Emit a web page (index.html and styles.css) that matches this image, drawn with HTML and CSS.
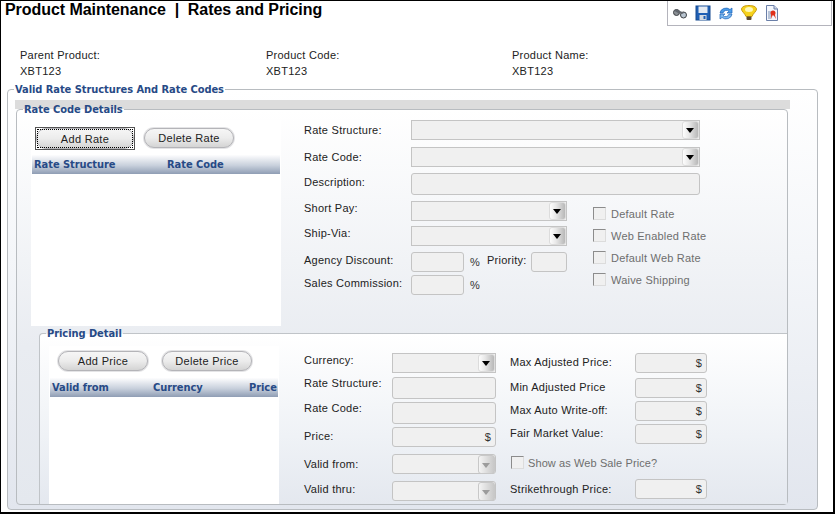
FILE: index.html
```html
<!DOCTYPE html>
<html lang="en">
<head>
<meta charset="utf-8">
<title>Product Maintenance | Rates and Pricing</title>
<link rel="stylesheet" href="styles.css">
</head>
<body>
<div class="frame">
  <header class="top">
    <h1 class="title">Product Maintenance&nbsp; |&nbsp; Rates and Pricing</h1>
    <div class="toolbar">
      <svg class="tool" width="16" height="16" viewBox="0 0 16 16"><circle cx="4.500" cy="7.500" r="3" fill="#8a8f94" stroke="#3c4044"/><circle cx="11.500" cy="10" r="3" fill="#b8c4d0" stroke="#3c4044"/><path d="M2 5.500 4.500 4 9 6.500 13 7.500 10 9 6 8z" fill="#60656c"/></svg>
      <svg class="tool" width="16" height="16" viewBox="0 0 16 16"><rect x="1" y="1" width="14" height="14" fill="#1f5fb4" stroke="#164a90"/><rect x="3.500" y="1.500" width="9" height="6.500" fill="#e4eaf2"/><rect x="4.500" y="10" width="7" height="5" fill="#d4dae2"/><rect x="8.500" y="11" width="2" height="3" fill="#1f5fb4"/></svg>
      <svg class="tool" width="16" height="16" viewBox="0 0 16 16"><path d="M2 8a6 5.500 0 0 1 10-3.500L14 3v5H9l2-1.500A3.500 3.500 0 0 0 5 8z" fill="#4a9be8" stroke="#1b63b8" stroke-width=".7"/><path d="M14 9a6 5.500 0 0 1-10 3.500L2 14V9h5l-2 1.500A3.500 3.500 0 0 0 11 9z" fill="#7db9f0" stroke="#1b63b8" stroke-width=".7"/></svg>
      <svg class="tool" width="16" height="16" viewBox="0 0 16 16"><path d="M.5 4C1 1.500 4 .5 8 .5s7 1 7.500 3.500c.3 2-3.500 4.500-4.500 7.500H5C4 8.500.2 6 .5 4z" fill="#f6d21c" stroke="#c79a10"/><ellipse cx="8" cy="4.500" rx="4" ry="2.500" fill="#fdf8b8"/><rect x="5.500" y="11.500" width="5" height="3.500" rx="1" fill="#5c4a30"/></svg>
      <svg class="tool" width="16" height="16" viewBox="0 0 16 16"><path d="M2.500.5H10L13.500 4v11.500h-11z" fill="#f4f6fb" stroke="#6a7fa8"/><path d="M10 .5V4h3.500" fill="#d0d8e8" stroke="#6a7fa8"/><rect x="4" y="6" width="3" height="8" fill="#b8c4d8"/><circle cx="9" cy="8" r="2.500" fill="#e0301a"/><path d="M7 10h1.500l-1 4zM9.500 10H11l1 4z" fill="#e0301a"/></svg>
    </div>
  </header>

  <section class="info">
    <div class="info-item"><span>Parent Product:</span><span>XBT123</span></div>
    <div class="info-item"><span>Product Code:</span><span>XBT123</span></div>
    <div class="info-item"><span>Product Name:</span><span>XBT123</span></div>
  </section>

  <fieldset class="outer">
    <legend class="legend">Valid Rate Structures And Rate Codes</legend>
    <div class="grey-band">
      <fieldset class="details">
        <legend class="legend">Rate Code Details</legend>

        <div class="rate-area">
          <div class="list-panel rate-list">
            <div class="btn-row">
              <span class="focus-ring"><button class="pill pill-add" type="button">Add Rate</button></span>
              <span class="halo"><button class="pill pill-del" type="button">Delete Rate</button></span>
            </div>
            <div class="thead">
              <span class="col-structure">Rate Structure</span>
              <span>Rate Code</span>
            </div>
          </div>

          <div class="rate-form">
            <div class="row row-s"><label class="lbl w107">Rate Structure:</label><div class="select wide"><i class="arrow"></i></div></div>
            <div class="row row-s m7"><label class="lbl w107">Rate Code:</label><div class="select wide"><i class="arrow"></i></div></div>
            <div class="row row-d m6"><label class="lbl w107 up2">Description:</label><div class="input wide tall"></div></div>
            <div class="rate-lower">
              <div class="lower-left">
                <div class="row row-s m6"><label class="lbl w107 up3">Short Pay:</label><div class="select mid"><i class="arrow"></i></div></div>
                <div class="row row-s m5"><label class="lbl w107 up3">Ship-Via:</label><div class="select mid"><i class="arrow"></i></div></div>
                <div class="row row-s m6">
                  <label class="lbl w107 up2">Agency Discount:</label>
                  <div class="input short"></div>
                  <span class="pct">%</span>
                  <label class="lbl priority up2">Priority:</label>
                  <div class="input tiny"></div>
                </div>
                <div class="row row-s m3">
                  <label class="lbl w107 up2">Sales Commission:</label>
                  <div class="input short"></div>
                  <span class="pct">%</span>
                </div>
              </div>
              <div class="checks">
                <div class="check"><i class="box"></i><span>Default Rate</span></div>
                <div class="check"><i class="box"></i><span>Web Enabled Rate</span></div>
                <div class="check"><i class="box"></i><span>Default Web Rate</span></div>
                <div class="check"><i class="box"></i><span>Waive Shipping</span></div>
              </div>
            </div>
          </div>
        </div>

        <fieldset class="pricing">
          <legend class="legend">Pricing Detail</legend>
          <div class="pricing-area">
            <div class="list-panel price-list">
              <div class="btn-row btn-row-price">
                <span class="halo"><button class="pill pill-price" type="button">Add Price</button></span>
                <span class="halo"><button class="pill pill-price" type="button">Delete Price</button></span>
              </div>
              <div class="thead thead-price">
                <span>Valid from</span>
                <span>Currency</span>
                <span>Price</span>
              </div>
            </div>

            <div class="price-form">
              <div class="row row-s"><label class="lbl w88 up3">Currency:</label><div class="select field"><i class="arrow"></i></div></div>
              <div class="row row-p m4"><label class="lbl w88 up5">Rate Structure:</label><div class="input field tall"></div></div>
              <div class="row row-p m3"><label class="lbl w88 up5">Rate Code:</label><div class="input field tall"></div></div>
              <div class="row row-s m3"><label class="lbl w88 up1">Price:</label><div class="input field money">$</div></div>
              <div class="row row-v m6"><label class="lbl w88">Valid from:</label><div class="input field"><i class="arrow arrow-off"></i></div></div>
              <div class="row row-v m6"><label class="lbl w88 up2">Valid thru:</label><div class="input field"><i class="arrow arrow-off"></i></div></div>
            </div>

            <div class="price-form-right">
              <div class="row row-s"><label class="lbl w125 up1">Max Adjusted Price:</label><div class="input amount money">$</div></div>
              <div class="row row-s m5"><label class="lbl w125 up1">Min Adjusted Price</label><div class="input amount money">$</div></div>
              <div class="row row-s m3"><label class="lbl w125 up1">Max Auto Write-off:</label><div class="input amount money">$</div></div>
              <div class="row row-s m3"><label class="lbl w125 up1">Fair Market Value:</label><div class="input amount money">$</div></div>
              <div class="check check-web"><i class="box"></i><span>Show as Web Sale Price?</span></div>
              <div class="row row-s m10"><label class="lbl w125">Strikethrough Price:</label><div class="input amount money">$</div></div>
            </div>
          </div>
        </fieldset>
      </fieldset>
    </div>
  </fieldset>
</div>
</body>
</html>
```

FILE: styles.css
```css
* { box-sizing: border-box; }

html, body { margin: 0; padding: 0; background: #fff; }

body {
  width: 835px;
  height: 515px;
  overflow: hidden;
  font-family: "Liberation Sans", Arial, sans-serif;
  font-size: 11px;
  letter-spacing: .25px;
  color: #222;
}

.frame {
  width: 835px;
  height: 514px;
  border: 1px solid #000;
  border-width: 1px 2px 2px 1px;
  overflow: hidden;
}

.top {
  display: flex;
  justify-content: space-between;
  align-items: flex-start;
  height: 46px;
}

.title {
  margin: 0 0 0 4px;
  font-size: 16px;
  line-height: 18px;
  font-weight: bold;
  letter-spacing: -.05px;
  color: #000;
}

.toolbar {
  width: 165px;
  height: 25px;
  margin-right: 1px;
  border: 1px solid #b4b4bc;
  border-top: 0;
  display: flex;
  align-items: center;
  gap: 7px;
  padding: 0 0 0 4px;
}

.tool { flex: none; }

.info {
  display: grid;
  grid-template-columns: repeat(3, 246px);
  padding-left: 19px;
  height: 36px;
  color: #222;
}

.info-item {
  display: flex;
  flex-direction: column;
  line-height: 16px;
}

.legend {
  font-family: "DejaVu Sans", Verdana, sans-serif;
  font-stretch: condensed;
  font-size: 11px;
  font-weight: bold;
  letter-spacing: -.05px;
  color: #274a86;
  line-height: 13px;
  padding: 0 1px;
  white-space: nowrap;
}

.outer {
  margin: 0 0 0 6px;
  padding: 6px 0 0 7px;
  width: 811px;
  height: 427px;
  border: 1px solid #b8bcc0;
  border-radius: 4px;
  min-width: 0;
  background: linear-gradient(#fff, #f4f6f9 40%, #e2e6ee);
}

.outer > .legend { margin-left: -1px; margin-bottom: -2px; }

.grey-band {
  width: 775px;
  height: 405px;
  background: linear-gradient(#dcdcdc 0, #dcdcdc 9px, transparent 9px);
  padding: 3px 0 0 1px;
}

.details {
  margin: 0;
  padding: 4px 0 0 0;
  width: 772px;
  height: 402px;
  border: 1px solid #b8bcc0;
  border-radius: 4px;
  min-width: 0;
  background: linear-gradient(#fff 0, #e9ecf1 60%, #e4e8ee 100%);
}

.details > .legend { margin-left: 6px; }

.rate-area {
  display: flex;
  height: 207px;
  padding-left: 14px;
}

.list-panel { background: #fff; flex: none; }

.rate-list { width: 250px; height: 206px; }

.btn-row {
  display: flex;
  align-items: flex-start;
  gap: 8px;
  padding: 7px 0 0 4px;
  height: 35px;
}

.focus-ring {
  display: block;
  width: 100px;
  height: 23px;
  padding: 1px;
  border: 1px solid #555;
  outline: 1px dotted #000;
  outline-offset: -3px;
}

.halo {
  display: block;
  padding: 1px;
  border-radius: 12px;
  background: #e4e4e6;
}

.pill {
  display: block;
  height: 20px;
  padding: 0;
  border: 1px solid #b4b4b8;
  border-radius: 10px;
  background: linear-gradient(#f6f6f6, #ececec 50%, #d4d4d4);
  font: 11px/16px "Liberation Sans", Arial, sans-serif;
  letter-spacing: .3px;
  color: #222;
}

.pill-add { margin: -1px 0 0 -1px; height: 21px; width: 98px; }
.pill-del { width: 90px; }
.pill-price { width: 90px; }

.thead {
  margin-left: 1px;
  width: 248px;
  height: 19px;
  padding: 3px 0 0 2px;
  display: flex;
  background: linear-gradient(#fdfdfe, #c8d0dc 55%, #8f9db4);
  font-family: "DejaVu Sans", Verdana, sans-serif;
  font-stretch: condensed;
  font-size: 11px;
  font-weight: bold;
  letter-spacing: -.05px;
  color: #274a86;
  line-height: 13px;
}

.col-structure { width: 133px; }

.rate-form {
  margin-left: 23px;
  width: 420px;
  flex: none;
}

.row {
  display: flex;
  align-items: center;
}

.row-s { height: 20px; }
.row-d { height: 22px; }
.row-p { height: 22px; }
.row-v { height: 21px; }

.m3 { margin-top: 3px; }
.m4 { margin-top: 4px; }
.m5 { margin-top: 5px; }
.m6 { margin-top: 6px; }
.m7 { margin-top: 7px; }
.m10 { margin-top: 10px; }

.lbl { flex: none; white-space: nowrap; color: #222; }
.w107 { width: 107px; }
.w88 { width: 88px; }
.w125 { width: 125px; }
.up1 { position: relative; top: -1px; }
.up2 { position: relative; top: -2px; }
.up3 { position: relative; top: -3px; }
.up5 { position: relative; top: -5px; }

.select, .input {
  position: relative;
  flex: none;
  height: 20px;
  background: #f0f0f0;
  border: 1px solid #c4c4c4;
}

.input { border-radius: 3px; }
.tall { height: 22px; }
.wide { width: 289px; }
.mid { width: 156px; }
.short { width: 53px; }
.tiny { width: 36px; }
.field { width: 104px; }
.amount { width: 72px; }

.arrow {
  position: absolute;
  top: 0;
  right: 0;
  width: 17px;
  height: 18px;
  border: 1px solid #dcdcdc;
  border-radius: 3px;
  background: linear-gradient(90deg, #fdfdfd, #e8e8e8 40%, #b8b8b8);
}

.arrow::after {
  content: "";
  position: absolute;
  left: 3px;
  top: 6px;
  border: 4px solid transparent;
  border-top: 5px solid #000;
  border-bottom: 0;
}

.arrow-off {
  height: 19px;
  border-color: #c8c8c8;
  background: linear-gradient(90deg, #f4f4f4, #c8c8c8);
}

.arrow-off::after { border-top-color: #9c9c9c; top: 7px; }

.money {
  display: flex;
  align-items: center;
  justify-content: flex-end;
  padding-right: 4px;
  font-size: 11px;
  color: #333;
}

.pct { width: 23px; padding-left: 6px; flex: none; color: #333; font-size: 11px; }

.priority { width: 44px; }

.rate-lower { display: flex; }

.lower-left { width: 289px; flex: none; }

.checks {
  padding: 12px 0 0 0;
  display: flex;
  flex-direction: column;
  gap: 9px;
}

.check {
  display: flex;
  align-items: center;
  gap: 5px;
  height: 13px;
  color: #6e6e6e;
  white-space: nowrap;
  letter-spacing: .2px;
}

.box {
  flex: none;
  width: 13px;
  height: 13px;
  background: #f0f0f0;
  border: 1px solid #8c8c8c;
  border-right-color: #dcdcdc;
  border-bottom-color: #dcdcdc;
}

.pricing {
  margin: 0 0 0 22px;
  padding: 6px 0 0 0;
  width: 748px;
  height: 177px;
  border: 1px solid #c0c4c8;
  border-right: 0;
  border-bottom: 0;
  border-radius: 4px 0 0 0;
  min-width: 0;
  background: linear-gradient(#fff, #eff2f6 60%, #e4e8ef);
}

.pricing > .legend { margin-left: 6px; }

.pricing-area {
  display: flex;
  height: 158px;
}

.price-list {
  width: 230px;
  height: 158px;
  margin-left: 9px;
}

.btn-row-price {
  gap: 12px;
  padding: 4px 0 0 8px;
  height: 32px;
}

.thead-price {
  width: 228px;
  display: grid;
  grid-template-columns: 101px 96px 1fr;
}

.price-form {
  margin-left: 25px;
  padding-top: 7px;
  width: 206px;
  flex: none;
}

.price-form-right {
  padding-top: 7px;
  width: 200px;
  flex: none;
}

.check-web { margin: 12px 0 0 1px; gap: 4px; letter-spacing: .1px; }
```
